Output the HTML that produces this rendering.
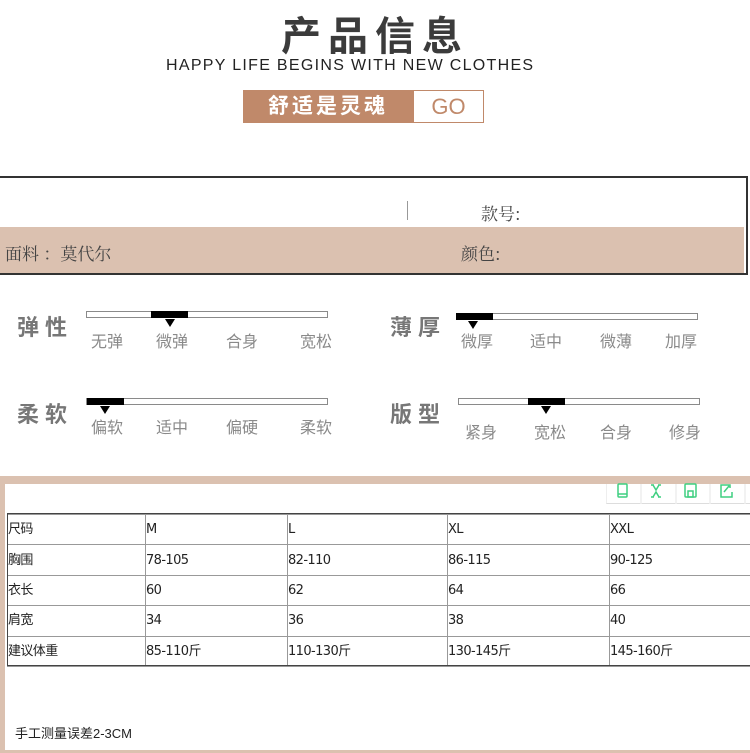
<!DOCTYPE html>
<html><head><meta charset="utf-8">
<style>
*{margin:0;padding:0;box-sizing:border-box}
body{width:750px;height:753px;background:#fff;position:relative;overflow:hidden;font-family:"Liberation Sans","Noto Sans CJK SC",sans-serif}
.a{position:absolute;white-space:nowrap}
.bar{position:absolute;height:7px;border:1px solid #8a8a8a;background:#fff}
.blk{position:absolute;top:-1px;height:7px;background:#000}
.tri{position:absolute;width:0;height:0;border-left:5px solid transparent;border-right:5px solid transparent;border-top:8px solid #000}
.lab{position:absolute;font-size:16px;color:#8a8a8a;white-space:nowrap}
.big{position:absolute;font-size:22px;color:#777;letter-spacing:6px;white-space:nowrap;font-weight:bold}
table{border-collapse:collapse;table-layout:fixed;width:760px;position:absolute;left:7px;top:514px;font-family:"DejaVu Sans","Noto Sans CJK SC",sans-serif;font-size:13px;color:#222}
td{border:1px solid #999;height:30.4px;padding:0;vertical-align:middle;letter-spacing:-0.6px;line-height:1;overflow:hidden}
</style></head><body>
<div class="a" style="left:281px;top:4px;font-size:40px;color:#3b3b3b;letter-spacing:7px;font-weight:bold">产品信息</div>
<div class="a" style="left:166px;top:57px;font-size:16px;color:#222;letter-spacing:1.3px">HAPPY LIFE BEGINS WITH NEW CLOTHES</div>
<div class="a" style="left:243px;top:90px;width:170px;height:33px;background:#c0896a;color:#fff;font-size:21px;letter-spacing:3px;text-align:center;line-height:33px;font-weight:bold">舒适是灵魂</div>
<div class="a" style="left:413px;top:90px;width:71px;height:33px;border:1px solid #c0896a;color:#c0896a;font-size:22px;text-align:center;line-height:31px">GO</div>

<div class="a" style="left:0;top:176px;width:748px;height:99px;border:2px solid #333;border-left:none;background:#fff"></div>
<div class="a" style="left:0;top:227px;width:744px;height:46px;background:#dbc1b0"></div>
<div class="a" style="left:407px;top:201px;width:1px;height:19px;background:#999"></div>
<div class="a" style="left:481px;top:200px;font-size:17px;color:#444;font-family:'Noto Serif CJK SC',serif">款号:</div>
<div class="a" style="left:5px;top:240px;font-size:17px;color:#444;font-family:'Noto Serif CJK SC',serif">面料 ：莫代尔</div>
<div class="a" style="left:461px;top:240px;font-size:17px;color:#444;font-family:'Noto Serif CJK SC',serif">颜色:</div>

<div class="big" style="left:17px;top:310px">弹性</div>
<div class="bar" style="left:86px;top:311px;width:242px"><div class="blk" style="left:64px;width:37px"></div></div>
<div class="tri" style="left:165px;top:319px"></div>
<div class="lab" style="left:91px;top:328px">无弹</div><div class="lab" style="left:156px;top:328px">微弹</div><div class="lab" style="left:226px;top:328px">合身</div><div class="lab" style="left:300px;top:328px">宽松</div>

<div class="big" style="left:390px;top:310px">薄厚</div>
<div class="bar" style="left:456px;top:313px;width:242px"><div class="blk" style="left:-1px;width:37px"></div></div>
<div class="tri" style="left:468px;top:321px"></div>
<div class="lab" style="left:461px;top:328px">微厚</div><div class="lab" style="left:530px;top:328px">适中</div><div class="lab" style="left:600px;top:328px">微薄</div><div class="lab" style="left:665px;top:328px">加厚</div>

<div class="big" style="left:17px;top:397px">柔软</div>
<div class="bar" style="left:86px;top:398px;width:242px"><div class="blk" style="left:0;width:37px"></div></div>
<div class="tri" style="left:100px;top:406px"></div>
<div class="lab" style="left:91px;top:414px">偏软</div><div class="lab" style="left:156px;top:414px">适中</div><div class="lab" style="left:226px;top:414px">偏硬</div><div class="lab" style="left:300px;top:414px">柔软</div>

<div class="big" style="left:390px;top:397px">版型</div>
<div class="bar" style="left:458px;top:398px;width:242px"><div class="blk" style="left:69px;width:37px"></div></div>
<div class="tri" style="left:541px;top:406px"></div>
<div class="lab" style="left:465px;top:419px">紧身</div><div class="lab" style="left:534px;top:419px">宽松</div><div class="lab" style="left:600px;top:419px">合身</div><div class="lab" style="left:669px;top:419px">修身</div>

<div class="a" style="left:0;top:476px;width:750px;height:277px;background:#dbc1b0"></div>
<div class="a" style="left:5px;top:484px;width:745px;height:266px;background:#fff"></div>
<div class="a" style="left:606px;top:484px;width:144px;height:20px;border-bottom:1px solid #ddd;border-left:1px solid #eee;background:#fff"></div>
<svg class="a" style="left:606px;top:480px" width="144" height="24" viewBox="0 0 144 24" fill="none" stroke="#3fcf80" stroke-width="1.5">
<line x1="35" y1="4" x2="35" y2="24" stroke="#eee"/><line x1="70" y1="4" x2="70" y2="24" stroke="#eee"/><line x1="104" y1="4" x2="104" y2="24" stroke="#eee"/><line x1="139" y1="4" x2="139" y2="24" stroke="#eee"/>
<rect x="12" y="4" width="9" height="13" rx="1"/><line x1="12" y1="14" x2="21" y2="14"/>
<path d="M47 5l3 5 3-5M47 17l3-5 3 5M45 5h3M52 5h3M45 17h3M52 17h3"/>
<rect x="79" y="4" width="11" height="13" rx="1"/><rect x="82" y="11" width="5" height="6"/>
<path d="M121 5h-6v12h11v-5M118 12l5-6M120 5h4v3"/>
</svg>
<table>
<tr><td style="width:138px">尺码</td><td style="width:142px">M</td><td style="width:160px">L</td><td style="width:162px">XL</td><td style="width:158px">XXL</td></tr>
<tr><td>胸围</td><td>78-105</td><td>82-110</td><td>86-115</td><td>90-125</td></tr>
<tr><td>衣长</td><td>60</td><td>62</td><td>64</td><td>66</td></tr>
<tr><td>肩宽</td><td>34</td><td>36</td><td>38</td><td>40</td></tr>
<tr><td>建议体重</td><td>85-110斤</td><td>110-130斤</td><td>130-145斤</td><td>145-160斤</td></tr>
</table>
<div class="a" style="left:7px;top:513px;width:743px;height:153px;border:1px solid #444;border-right:none;pointer-events:none"></div>
<div class="a" style="left:15px;top:723px;font-size:13px;color:#222">手工测量误差2-3CM</div>
</body></html>
